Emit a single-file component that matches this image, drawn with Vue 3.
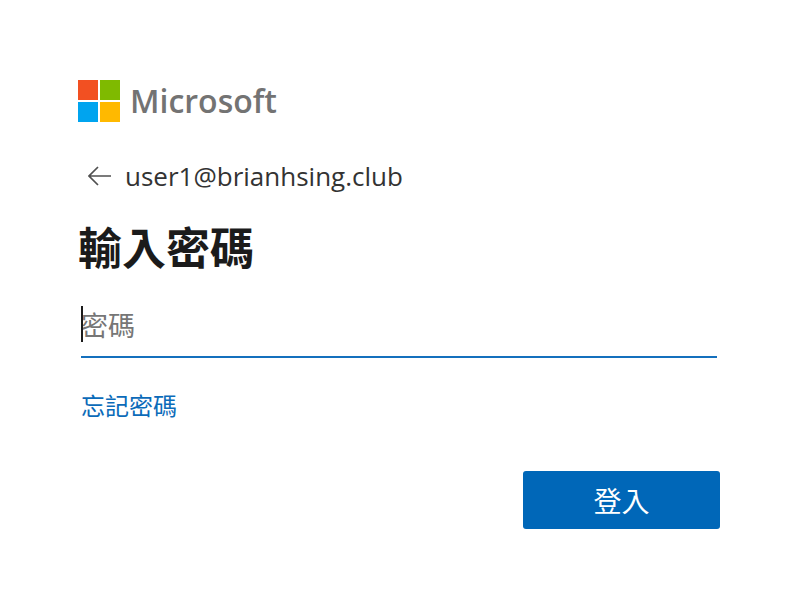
<script setup>
import { ref, onMounted } from 'vue'

const email = 'user1@brianhsing.club'
const password = ref('')
const field = ref(null)

onMounted(() => field.value?.focus())
</script>

<template>
  <main class="page">
    <div class="brand">
      <svg class="logo" viewBox="0 0 42 42" aria-hidden="true">
        <path fill="#f25022" d="M0 0h20v20H0z" />
        <path fill="#7fba00" d="M22 0h20v20H22z" />
        <path fill="#00a4ef" d="M0 22h20v20H0z" />
        <path fill="#ffb900" d="M22 22h20v20H22z" />
      </svg>
      <span class="brand-name">Microsoft</span>
    </div>

    <form class="form" @submit.prevent>
      <div class="identity">
        <button class="back" type="button" aria-label="返回">
          <svg viewBox="0 0 24 20" aria-hidden="true">
            <path d="M23 10H2M10 1 1 10l9 9" fill="none" stroke="#505050" stroke-width="1.7" />
          </svg>
        </button>
        <span>{{ email }}</span>
      </div>
      <h1 class="title">輸入密碼</h1>
      <div class="field">
        <input ref="field" v-model="password" class="password" type="password" placeholder="密碼" aria-label="密碼" />
        <span v-if="!password" class="caret" aria-hidden="true"></span>
      </div>
      <a class="forgot" href="#">忘記密碼</a>
      <button class="submit" type="submit">登入</button>
    </form>
  </main>
</template>

<style>
body {
  background: #fff;
}
</style>

<style scoped>
.page {
  box-sizing: border-box;
  padding: 80px 80px 80px 78px;
  color: #1b1b1b;
  font-family: "Noto Sans", "Noto Sans CJK TC", sans-serif;
}
.brand {
  display: flex;
  align-items: center;
  gap: 10px;
  height: 42px;
}
.logo {
  width: 42px;
  height: 42px;
}
.brand-name {
  color: #737373;
  font-family: "Open Sans", sans-serif;
  font-size: 32px;
  font-weight: 600;
  line-height: 44px;
}
.form {
  display: flex;
  flex-direction: column;
}
.identity {
  display: flex;
  align-items: center;
  gap: 13px;
  margin-top: 36px;
  padding-left: 10px;
  font-family: "Open Sans", sans-serif;
  font-size: 26px;
  line-height: 36px;
  color: #333;
}
.back {
  display: flex;
  padding: 0;
  border: 0;
  background: none;
}
.back svg {
  width: 24px;
  height: 20px;
}
.title {
  margin: 22px 0 0;
  font-size: 44px;
  font-weight: 700;
  line-height: 64px;
}
.field {
  position: relative;
  display: flex;
  margin: 14px 3px 0;
}
.password {
  box-sizing: border-box;
  flex: 1;
  min-width: 0;
  height: 64px;
  padding: 0;
  border: 0;
  border-bottom: 2px solid #1470bd;
  border-radius: 0;
  outline: 0;
  background: none;
  color: #1b1b1b;
  font-family: inherit;
  font-size: 27px;
}
.password:placeholder-shown {
  caret-color: transparent;
}
.password::placeholder {
  color: #767676;
  opacity: 1;
}
.caret {
  position: absolute;
  top: 12px;
  left: 0;
  width: 2px;
  height: 36px;
  background: #1b1b1b;
  pointer-events: none;
}
.forgot {
  align-self: flex-start;
  margin: 30px 3px 0;
  color: #0b6bb9;
  font-size: 24px;
  line-height: 36px;
  text-decoration: none;
}
.submit {
  align-self: flex-end;
  width: 197px;
  height: 58px;
  margin-top: 47px;
  padding: 0;
  border: 0;
  border-radius: 3px;
  background: #0067b8;
  color: #fff;
  font-family: inherit;
  font-size: 28px;
}
</style>
